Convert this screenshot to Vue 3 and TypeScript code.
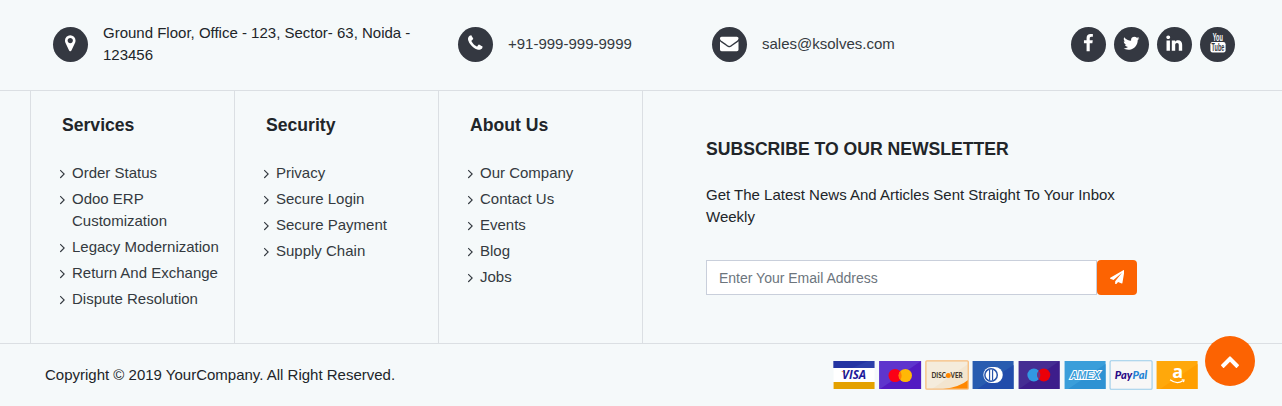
<script setup lang="ts">
interface Column { title: string; links: string[] }

const columns: Column[] = [
  { title: 'Services', links: ['Order Status', 'Odoo ERP Customization', 'Legacy Modernization', 'Return And Exchange', 'Dispute Resolution'] },
  { title: 'Security', links: ['Privacy', 'Secure Login', 'Secure Payment', 'Supply Chain'] },
  { title: 'About Us', links: ['Our Company', 'Contact Us', 'Events', 'Blog', 'Jobs'] },
]

const icons = {
  marker: 'M1152 640q0-106-75-181t-181-75-181 75-75 181 75 181 181 75 181-75 75-181zm256 0q0 109-33 179l-364 774q-16 33-47.5 52t-67.5 19-67.5-19-46.5-52l-365-774q-33-70-33-179 0-212 150-362t362-150 362 150 150 362z',
  phone: 'M1600 1240q0 27-10 70.5t-21 68.5q-21 50-122 106-94 51-186 51-27 0-53-3.5t-57.5-12.5-47-14.5-55.5-20.5-49-18q-98-35-175-83-127-79-264-216t-216-264q-48-77-83-175-3-9-18-49t-20.5-55.5-14.5-47-12.5-57.5-3.5-53q0-92 51-186 56-101 106-122 25-11 68.5-21t70.5-10q14 0 21 3 18 6 53 76 11 19 30 54t35 63.5 31 53.5q3 4 17.5 25t21.5 35.5 7 28.5q0 20-28.5 50t-62 55-62 53-28.5 46q0 9 5 22.5t8.5 20.5 14 24 11.5 19q76 137 174 235t235 174q2 1 19 11.5t24 14 20.5 8.5 22.5 5q18 0 46-28.5t53-62 55-62 50-28.5q14 0 28.5 7t35.5 21.5 25 17.5q25 15 53.5 31t63.5 35 54 30q70 35 76 53 3 7 3 21z',
  envelope: 'M1792 710v794q0 66-47 113t-113 47h-1472q-66 0-113-47t-47-113v-794q44 49 101 87 362 246 497 345 57 42 92.5 65.5t94.5 48 110 24.5h2q51 0 110-24.5t94.5-48 92.5-65.5q170-123 498-345 57-39 100-87zm0-294q0 79-49 151t-122 123q-376 261-468 325-10 7-42.5 31t-54 38.5-52 32.5-57.5 27-50 9h-2q-23 0-50-9t-57.5-27-52-32.5-54-38.5-42.5-31q-91-64-262-182.5t-205-142.5q-62-42-117-115.5t-55-136.5q0-78 41.5-130t118.5-52h1472q65 0 112.5 47t47.5 113z',
  plane: 'M1764 11q33 24 27 64l-256 1536q-5 29-32 45-14 8-31 8-11 0-24-5l-453-185-242 295q-18 23-49 23-13 0-22-4-19-7-30.5-23.5t-11.5-36.5v-349l864-1059-1069 925-395-162q-37-14-40-55-2-40 32-59l1664-960q15-9 32-9 20 0 36 11z',
  angle: 'M1171 960q0 13-10 23l-466 466q-10 10-23 10t-23-10l-50-50q-10-10-10-23t10-23l393-393-393-393q-10-10-10-23t10-23l50-50q10-10 23-10t23 10l466 466q10 10 10 23z',
  up: 'M1683 1331l-166 165q-19 19-45 19t-45-19l-531-531-531 531q-19 19-45 19t-45-19l-166-165q-19-19-19-45.5t19-45.5l742-741q19-19 45-19t45 19l742 741q19 19 19 45.5t-19 45.5z',
}

const social: string[] = [
  'M1343 12v264h-157q-86 0-116 36t-30 108v189h293l-39 296h-254v759h-306v-759h-255v-296h255v-218q0-186 104-288.5t277-102.5q147 0 228 12z',
  'M1684 408q-67 98-162 167 1 14 1 42 0 130-38 259.5t-115.5 248.5-184.5 210.5-258 146-323 54.5q-271 0-496-145 35 4 78 4 225 0 401-138-105-2-188-64.5t-114-159.5q33 5 61 5 43 0 85-11-112-23-185.5-111.5t-73.5-205.5v-4q68 38 146 41-66-44-105-115t-39-154q0-88 44-163 121 149 294.5 238.5t371.5 99.5q-8-38-8-74 0-134 94.5-228.5t228.5-94.5q140 0 236 102 109-21 205-78-37 115-142 178 93-10 186-50z',
  'M477 625v991h-330v-991h330zm21-306q1 73-50.5 122t-135.5 49h-2q-82 0-132-49t-50-122q0-74 51.5-122.5t134.5-48.5 133 48.5 51 122.5zm1166 729v568h-329v-530q0-105-40.5-164.5t-126.5-59.5q-63 0-105.5 34.5t-63.5 85.5q-11 30-11 81v553h-329q2-399 2-647t-1-296l-1-48h329v144h-2q20-32 41-56t56.5-52 87-43.5 114.5-15.5q171 0 275 113.5t104 332.5z',
]
</script>

<template>
  <footer class="footer">
    <section class="contact">
      <div class="item address">
        <span class="disc"><svg viewBox="0 0 1792 1792"><path :d="icons.marker" /></svg></span>
        <p>Ground Floor, Office - 123, Sector- 63, Noida - 123456</p>
      </div>
      <div class="item phone">
        <span class="disc"><svg viewBox="0 0 1792 1792"><path :d="icons.phone" /></svg></span>
        <a>+91-999-999-9999</a>
      </div>
      <div class="item mail">
        <span class="disc"><svg viewBox="0 0 1792 1792"><path :d="icons.envelope" /></svg></span>
        <a>sales@ksolves.com</a>
      </div>
      <div class="social">
        <span v-for="d in social" :key="d" class="disc"><svg viewBox="0 0 1792 1792"><path :d="d" /></svg></span>
        <span class="disc">
          <svg class="youtube" viewBox="0 0 18 20">
            <text transform="translate(3.7 8) scale(.56 1)" font-size="10">You</text>
            <rect x="1.4" y="9" width="15.2" height="10.4" rx="2.2" />
            <text class="tube" transform="translate(2.6 17.8) scale(.55 1)" font-size="10">Tube</text>
          </svg>
        </span>
      </div>
    </section>

    <section class="middle">
      <nav v-for="column in columns" :key="column.title" class="column">
        <h2>{{ column.title }}</h2>
        <ul>
          <li v-for="link in column.links" :key="link">
            <svg class="angle" viewBox="0 0 1792 1792"><path :d="icons.angle" /></svg>
            <a>{{ link }}</a>
          </li>
        </ul>
      </nav>
      <div class="newsletter">
        <h2>SUBSCRIBE TO OUR NEWSLETTER</h2>
        <p>Get The Latest News And Articles Sent Straight To Your Inbox Weekly</p>
        <form @submit.prevent>
          <input type="email" placeholder="Enter Your Email Address">
          <button type="submit" aria-label="Subscribe"><svg viewBox="0 0 1792 1792"><path :d="icons.plane" /></svg></button>
        </form>
      </div>
    </section>

    <section class="bottom">
      <p>Copyright © 2019 YourCompany. All Right Reserved.</p>
      <div class="cards">
        <svg viewBox="-23 -15 46 30">
          <rect x="-20.5" y="-14" width="41" height="28" fill="#fff" />
          <rect x="-20.5" y="-14" width="41" height="7" fill="#2b3fa9" />
          <path d="M-20.5-7V-14H14L-2-7z" fill="#2334a2" />
          <rect x="-20.5" y="7" width="41" height="7" fill="#e4a100" />
          <path d="M-13-4h3.6l.6 2.6z" fill="#e8a50a" />
          <text class="mark" x="-12" y="4.4" font-size="11.5" textLength="24" lengthAdjust="spacingAndGlyphs" fill="#21199a">VISA</text>
        </svg>
        <svg viewBox="-23 -15 46 30">
          <rect x="-21" y="-14" width="42" height="28" fill="#5e35cd" />
          <path d="M21-14V14H-20z" fill="#531bc2" />
          <circle cx="-5" cy=".5" r="6.6" fill="#fb0016" />
          <circle cx="5.3" cy=".5" r="6.6" fill="#ffb806" />
          <path d="M0-3.8a6.6 6.6 0 0 1 0 8.6a6.6 6.6 0 0 1 0-8.6z" fill="#ff7d07" />
        </svg>
        <svg viewBox="-23 -15 46 30">
          <rect x="-21.2" y="-14.2" width="42.4" height="28.4" rx="1" fill="#f5ecdc" />
          <path d="M21-11V14H-15z" fill="#f3e5cf" />
          <path d="M-4 14Q13 12 21 5v9z" fill="#ff8700" />
          <rect x="-21.2" y="-14.2" width="42.4" height="28.4" rx="1" fill="none" stroke="#f8bd7e" stroke-width="1.3" />
          <text class="brand" x="-15.6" y="3" font-size="6.9" textLength="14.4" lengthAdjust="spacingAndGlyphs" fill="#41372b">DISC</text>
          <circle cx="1.2" cy=".6" r="2.5" fill="#ff8700" />
          <text class="brand" x="3.5" y="3" font-size="6.9" textLength="12" lengthAdjust="spacingAndGlyphs" fill="#41372b">VER</text>
        </svg>
        <svg viewBox="-23 -15 46 30">
          <rect x="-20.5" y="-14" width="41" height="28" fill="#285cb0" />
          <path d="M20.5-10V14H-16z" fill="#214cab" />
          <rect x="-9.7" y="-8" width="19.4" height="16" rx="8" fill="#fff" />
          <circle cx="-2" cy="0" r="6.2" fill="#fff" stroke="#2855ab" stroke-width="1.5" />
          <path d="M-3.5-5.2v10.4M-.5-5.2v10.4" stroke="#2855ab" stroke-width="1.2" />
        </svg>
        <svg viewBox="-23 -15 46 30">
          <rect x="-20.5" y="-14" width="41" height="28" fill="#452d93" />
          <path d="M20.5-14V14H-20z" fill="#3d1d8b" />
          <circle cx="-5.2" cy="0" r="6.5" fill="#3198e2" />
          <circle cx="4.7" cy="0" r="6.5" fill="#eb0008" />
          <path d="M-.3-4.3a6.5 6.5 0 0 1 0 8.6a6.5 6.5 0 0 1 0-8.6z" fill="#67348b" />
        </svg>
        <svg viewBox="-23 -15 46 30">
          <rect x="-20.5" y="-14" width="41" height="28" fill="#3a9eda" />
          <path d="M20.5-11V14H-17z" fill="#2e92d3" />
          <text class="amex" x="-14.8" y="3.7" font-size="10" textLength="29.6" lengthAdjust="spacingAndGlyphs">AMEX</text>
        </svg>
        <svg viewBox="-23 -15 46 30">
          <rect x="-21" y="-14.2" width="42" height="28.4" rx="1" fill="#f8f7f7" stroke="#9bcbe9" stroke-width="1.1" />
          <text class="pay" x="-16.3" y="3.8" font-size="11" textLength="17.4" lengthAdjust="spacingAndGlyphs" fill="#280986">Pay</text>
          <text class="pay" x="1.5" y="3.8" font-size="11" textLength="14.6" lengthAdjust="spacingAndGlyphs" fill="#2384d4">Pal</text>
        </svg>
        <svg viewBox="-23 -15 46 30">
          <rect x="-20.5" y="-14" width="41" height="28" fill="#ffa80b" />
          <path d="M20.5-11V14H-17z" fill="#ff9f00" />
          <text class="amazon" x="-4.9" y="3.4" font-size="18">a</text>
          <path d="M-7 4.8Q-.5 9.6 5.6 6M4.6 4.8l2.4.2-.6 2.2" fill="none" stroke="#fff" stroke-width="1.2" />
        </svg>
      </div>
    </section>

    <button class="to-top" aria-label="Back to top"><svg viewBox="0 0 1792 1792"><path :d="icons.up" /></svg></button>
  </footer>
</template>

<style>
body { margin: 0; background: #f5f9fa; }
</style>

<style scoped>
.footer {
  position: relative;
  box-sizing: border-box;
  height: 406px;
  overflow: hidden;
  background: #f5f9fa;
  color: #212529;
  font: 15px/22px "Liberation Sans", Arial, sans-serif;
}
p, h2, ul { margin: 0; padding: 0; }
svg { display: block; flex: none; }
.contact {
  display: flex;
  align-items: center;
  box-sizing: border-box;
  height: 91px;
  padding: 0 47px 2px 53px;
  border-bottom: 1px solid #dbdfe3;
}
.item { display: flex; align-items: center; gap: 15px; }
.item a, .column a { color: #343a40; }
.address { width: 405px; }
.address p { width: 318px; }
.phone { width: 254px; }
.disc {
  display: flex;
  flex: none;
  align-items: center;
  justify-content: center;
  width: 35px;
  height: 35px;
  border-radius: 50%;
  background: #343841;
}
.disc svg { width: 18.5px; height: 18.5px; margin: 0 .5px 1px 0; fill: #fff; }
.social { display: flex; gap: 8px; margin-left: auto; }
.disc .youtube { width: 18px; height: 20px; margin: 0 0 2px; overflow: visible; }
.youtube text { font-family: "Liberation Sans", Arial, sans-serif; font-weight: bold; }
.youtube .tube { fill: #343841; }
.middle {
  display: flex;
  box-sizing: border-box;
  height: 253px;
  padding-left: 30px;
  border-bottom: 1px solid #dbdfe3;
}
.column {
  box-sizing: border-box;
  width: 204px;
  padding: 23px 10px 0 29px;
  border-left: 1px solid #dbdfe3;
}
h2 { font-size: 17.6px; line-height: 22px; font-weight: bold; }
.column h2 { padding-left: 2px; }
ul { display: flex; flex-direction: column; gap: 4px; margin-top: 26px; list-style: none; }
li { display: flex; }
.angle { width: 15px; height: 15px; margin: 4px 0 0 -5px; fill: #343a40; }
li a { margin-left: 2px; }
.newsletter {
  flex: 1;
  padding: 47px 0 0 63px;
  border-left: 1px solid #dbdfe3;
}
.newsletter p { width: 430px; margin-top: 24px; }
form { display: flex; margin-top: 32px; }
input {
  box-sizing: border-box;
  width: 391px;
  height: 35px;
  padding: 0 12px;
  border: 1px solid #c9cfdb;
  border-radius: 0;
  background: #fff;
  font: 14px "Liberation Sans", Arial, sans-serif;
}
input::placeholder { color: #6c757d; opacity: 1; }
button {
  display: flex;
  align-items: center;
  justify-content: center;
  padding: 0;
  border: 0;
  background: #fc6302;
}
button svg { fill: #fff; }
form button { width: 40px; height: 35px; border-radius: 4px; }
form button svg { width: 14.5px; height: 14.5px; margin-bottom: 1px; }
.bottom { display: flex; justify-content: space-between; height: 62px; padding: 0 81.6px 0 45px; }
.bottom p { padding-top: 20px; }
.cards { display: flex; padding-top: 16px; }
.cards svg { width: 46.15px; height: 30px; overflow: visible; }
.mark { font-family: "Open Sans", sans-serif; font-style: italic; font-weight: bold; }
.pay { font-family: Lato, sans-serif; font-style: italic; font-weight: 900; }
.brand { font-family: Lato, sans-serif; font-weight: 900; }
.amex {
  fill: #3a9eda;
  stroke: #fff;
  stroke-width: 2px;
  paint-order: stroke;
  font-family: "Liberation Sans", Arial, sans-serif;
  font-style: italic;
  font-weight: bold;
}
.amazon { fill: #fff; font-family: "Open Sans", sans-serif; font-weight: bold; }
.to-top {
  position: absolute;
  top: 336px;
  left: 1205px;
  width: 50px;
  height: 50px;
  border-radius: 50%;
}
.to-top svg { width: 20px; height: 20px; }
</style>
